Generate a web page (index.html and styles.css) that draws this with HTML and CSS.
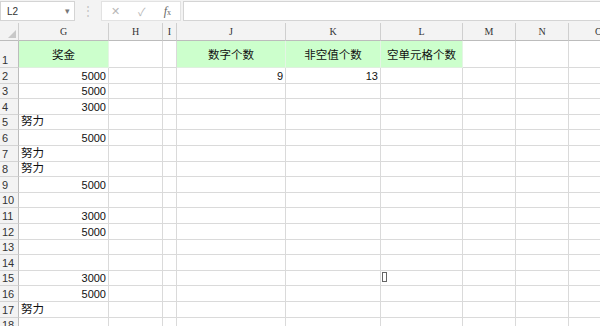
FILE: index.html
```html
<!DOCTYPE html>
<html lang="zh-CN">
<head>
    <meta charset="UTF-8">
    <meta name="viewport" content="width=device-width, initial-scale=1.0">
    <title>工作表</title>
    <link rel="stylesheet" href="styles.css">
</head>
<body>

<div class="toolbar">
    <div class="name-box">
        <span>L2</span>
        <span class="arrow">&#9662;</span>
    </div>
    <div class="grip">&#8942;</div>
    <div class="fx-buttons">
        <span class="btn">&#10005;</span>
        <span class="btn">&#10003;</span>
        <span class="btn fx"><i>f</i><small>x</small></span>
    </div>
    <div class="formula"></div>
</div>

<div class="sheet" id="sheet"></div>

<div class="cursor"></div>

<script>
// 列标题
const cols = ['G', 'H', 'I', 'J', 'K', 'L', 'M', 'N', 'O'];

// 每行的数据: [行号, G, J, K]
const rows = [
    [1, '奖金', '数字个数', '非空值个数', '空单元格个数'],
    [2, '5000', '9', '13'],
    [3, '5000'], [4, '3000'], [5, '努力'], [6, '5000'],
    [7, '努力'], [8, '努力'], [9, '5000'], [10, ''],
    [11, '3000'], [12, '5000'], [13, ''], [14, ''],
    [15, '3000'], [16, '5000'], [17, '努力'], [18, '']
];

let html = '<div class="corner"><span class="tri"></span></div>';
cols.forEach(c => { html += `<div class="col-head">${c}</div>`; });

rows.forEach(r => {
    const n = r[0];
    html += `<div class="row-head">${n}</div>`;
    cols.forEach((c, i) => {
        let text = '';
        let cls = 'cell';
        if (n === 1) {
            if (c === 'G') text = r[1];
            if (c === 'J') text = r[2];
            if (c === 'K') text = r[3];
            if (c === 'L') text = r[4];
            if (text) cls += ' title';
        } else {
            if (c === 'G') text = r[1] || '';
            if (n === 2 && c === 'J') text = r[2];
            if (n === 2 && c === 'K') text = r[3];
            if (/^\d+$/.test(text)) cls += ' num';
        }
        html += `<div class="${cls}">${text}</div>`;
    });
});

document.getElementById('sheet').innerHTML = html;
</script>

</body>
</html>
```

FILE: styles.css
```css
body {
    margin: 0;
    width: 600px;
    height: 326px;
    overflow: hidden;
    background: #fff;
    font-family: "Liberation Sans", "Noto Sans CJK SC", sans-serif;
    position: relative;
}
.toolbar {
    display: flex;
    height: 23px;
    background: #f3f3f3;
    box-sizing: border-box;
    padding-top: 1px;
}
.name-box {
    width: 75px;
    height: 20px;
    box-sizing: border-box;
    background: #fff;
    border: 1px solid #d4d4d4;
    display: flex;
    align-items: center;
    justify-content: space-between;
    padding: 0 4px 0 6px;
    font-size: 10px;
    color: #333;
}
.name-box .arrow {
    font-size: 9px;
    color: #777;
}
.grip {
    width: 26px;
    text-align: center;
    color: #c4c4c4;
    font-size: 12px;
    line-height: 20px;
}
.fx-buttons {
    width: 80px;
    height: 20px;
    display: flex;
    align-items: center;
    justify-content: space-around;
    background: #fff;
    border: 1px solid #e2e2e2;
    box-sizing: border-box;
    color: #b8b8b8;
    font-size: 11px;
}
.fx-buttons .fx {
    color: #666;
    font-family: "Liberation Serif", serif;
    font-size: 12px;
}
.fx-buttons .fx small {
    font-size: 8px;
}
.formula {
    flex: 1;
    height: 20px;
    margin-left: 2px;
    background: #fff;
    border: 1px solid #d4d4d4;
    border-right: none;
    box-sizing: border-box;
}
.sheet {
    display: grid;
    grid-template-columns: 19px 90px 54px 14px 109px 95px 82px 53px 53px 60px;
    grid-template-rows: 18px 27px repeat(17, 15.6px);
}
.sheet > div {
    box-sizing: border-box;
    border-right: 1px solid #dadada;
    border-bottom: 1px solid #dadada;
    overflow: hidden;
    white-space: nowrap;
}
.corner {
    background: #f3f3f3;
    position: relative;
}
.corner .tri {
    position: absolute;
    right: 2px;
    bottom: 2px;
    width: 0;
    height: 0;
    border-left: 8px solid transparent;
    border-bottom: 8px solid #c8c8c8;
}
.sheet > .col-head,
.sheet > .corner {
    background: #f3f3f3;
    border-right-color: #cfcfcf;
    border-bottom-color: #bcbcbc;
}
.col-head {
    text-align: center;
    font-family: "Liberation Serif", serif;
    font-size: 10px;
    line-height: 18px;
    color: #333;
}
.sheet > .row-head {
    background: #f3f3f3;
    border-right-color: #bcbcbc;
    border-bottom-color: #d4d4d4;
    font-size: 11px;
    color: #333;
    padding-left: 2px;
    display: flex;
    align-items: flex-end;
    padding-bottom: 1px;
}
.cell {
    font-size: 11.5px;
    color: #111;
    display: flex;
    align-items: flex-end;
    padding: 0 2px 1px 2px;
}
.cell.num {
    justify-content: flex-end;
    font-size: 11px;
}
.sheet > .cell.title {
    background: #ccffcc;
    justify-content: center;
    align-items: center;
    padding-bottom: 0;
    border-right-color: #e4f5e4;
    border-bottom-color: #dff0df;
    font-size: 11.5px;
}
.cursor {
    position: absolute;
    left: 382px;
    top: 272px;
    width: 3px;
    height: 8px;
    border: 1px solid #666;
}
```
